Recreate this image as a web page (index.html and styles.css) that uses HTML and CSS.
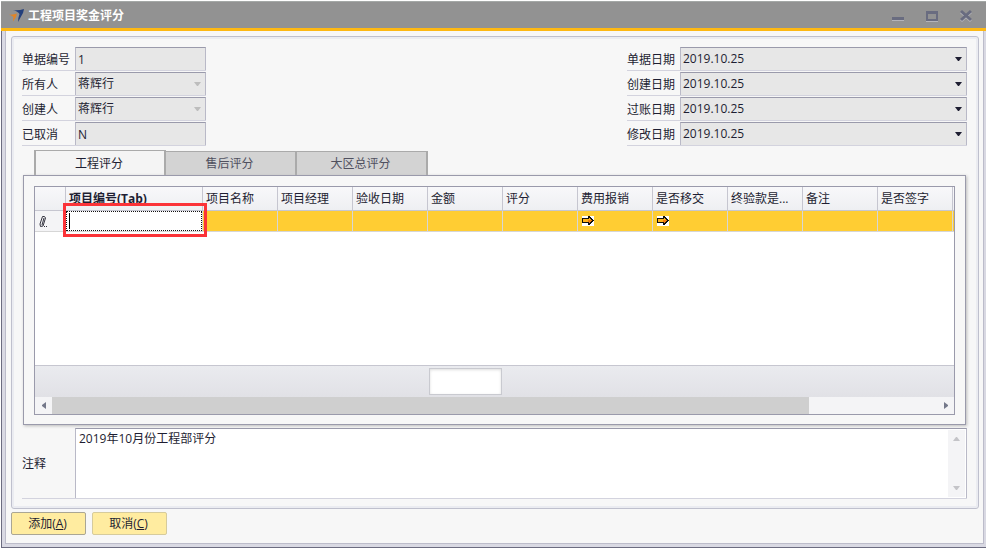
FILE: index.html
```
<!DOCTYPE html>
<html lang="zh-CN">
<head>
  <meta charset="UTF-8" />
  <meta name="viewport" content="width=device-width, initial-scale=1.0"/>
  <title>工程项目奖金评分</title>
  <link rel="stylesheet" href="styles.css">
</head>
<body>
  <div class="window">
    <div class="titlebar">
      <svg class="logo" width="16" height="14" viewBox="0 0 16 14">
        <path d="M4 1 Q9 2 15 0 L14 4 L9 13 Q9 9 10.500 5 Q9 2.500 4 1Z" fill="#24407c"/>
        <path d="M0 5.500 Q4 6 8 4.500 L7 8 L4 12.500 Q4 10 4.500 8 Q3 6.500 0 5.500Z" fill="#e08428"/>
      </svg>
      <h1 class="title">工程项目奖金评分</h1>
      <button class="win-btn" aria-label="最小化">
        <svg width="14" height="14" viewBox="0 0 14 14"><path d="M1 11h12v1H1z" fill="#b4b4ba"/><path d="M1 8h12v3H1z" fill="#696c80"/></svg>
      </button>
      <button class="win-btn" aria-label="最大化">
        <svg width="14" height="14" viewBox="0 0 14 14"><path d="M1 12h12v1H1z" fill="#b4b4ba"/><path d="M1 2h12v10H1zM3 5v5h8V5z" fill="#696c80" fill-rule="evenodd"/></svg>
      </button>
      <button class="win-btn" aria-label="关闭">
        <svg width="14" height="14" viewBox="0 0 14 14"><path d="M2 3l10 9M12 3L2 12" stroke="#b4b4ba" stroke-width="3"/><path d="M2 2l10 9M12 2L2 11" stroke="#696c80" stroke-width="3"/></svg>
      </button>
    </div>

    <div class="frame">
      <div class="client">
        <form class="panel" id="scoreForm">
          <div class="fields">
            <div class="field-col left">
              <div class="field">
                <label for="docNo">单据编号</label>
                <div class="control"><input id="docNo" type="text" value="1" readonly></div>
              </div>
              <div class="field">
                <label for="owner">所有人</label>
                <div class="control">
                  <select id="owner" disabled><option>蒋辉行</option></select>
                  <svg class="caret off" width="7" height="4" viewBox="0 0 7 4"><path d="M0 0h7L4 4H3z"/></svg>
                </div>
              </div>
              <div class="field">
                <label for="creator">创建人</label>
                <div class="control">
                  <select id="creator" disabled><option>蒋辉行</option></select>
                  <svg class="caret off" width="7" height="4" viewBox="0 0 7 4"><path d="M0 0h7L4 4H3z"/></svg>
                </div>
              </div>
              <div class="field">
                <label for="cancelled">已取消</label>
                <div class="control"><input id="cancelled" type="text" value="N" readonly></div>
              </div>
            </div>

            <div class="field-col right">
              <div class="field">
                <label for="docDate">单据日期</label>
                <div class="control">
                  <select id="docDate"><option>2019.10.25</option></select>
                  <svg class="caret" width="7" height="4" viewBox="0 0 7 4"><path d="M0 0h7L4 4H3z"/></svg>
                </div>
              </div>
              <div class="field">
                <label for="createDate">创建日期</label>
                <div class="control">
                  <select id="createDate"><option>2019.10.25</option></select>
                  <svg class="caret" width="7" height="4" viewBox="0 0 7 4"><path d="M0 0h7L4 4H3z"/></svg>
                </div>
              </div>
              <div class="field">
                <label for="postDate">过账日期</label>
                <div class="control">
                  <select id="postDate"><option>2019.10.25</option></select>
                  <svg class="caret" width="7" height="4" viewBox="0 0 7 4"><path d="M0 0h7L4 4H3z"/></svg>
                </div>
              </div>
              <div class="field">
                <label for="editDate">修改日期</label>
                <div class="control">
                  <select id="editDate"><option>2019.10.25</option></select>
                  <svg class="caret" width="7" height="4" viewBox="0 0 7 4"><path d="M0 0h7L4 4H3z"/></svg>
                </div>
              </div>
            </div>
          </div>

          <div class="tabs" role="tablist">
            <button type="button" class="tab active" role="tab" aria-selected="true">工程评分</button>
            <button type="button" class="tab" role="tab" aria-selected="false">售后评分</button>
            <button type="button" class="tab" role="tab" aria-selected="false">大区总评分</button>
          </div>

          <div class="tab-page" role="tabpanel">
            <div class="grid">
              <div class="grid-body">
                <table>
                  <colgroup>
                    <col class="col-mark"><col class="col-code">
                    <col class="col"><col class="col"><col class="col"><col class="col"><col class="col">
                    <col class="col"><col class="col"><col class="col"><col class="col"><col class="col"><col class="col">
                  </colgroup>
                  <thead>
                    <tr>
                      <th></th>
                      <th class="key">项目编号(Tab)</th>
                      <th>项目名称</th>
                      <th>项目经理</th>
                      <th>验收日期</th>
                      <th>金额</th>
                      <th>评分</th>
                      <th>费用报销</th>
                      <th>是否移交</th>
                      <th>终验款是...</th>
                      <th>备注</th>
                      <th>是否签字</th>
                      <th></th>
                    </tr>
                  </thead>
                  <tbody>
                    <tr>
                      <td class="mark">
                        <svg width="10" height="14" viewBox="0 0 10 14"><path d="M3.500 2.500L5.500 2.500L6.500 4L4 12L1.500 12.500L1 10Z M5 4L3 11" fill="none" stroke="#33333f"/><path d="M5 12h1v1H5zM7 12h1v1H7z" fill="#33333f"/></svg>
                      </td>
                      <td class="edit">
                        <input type="text" aria-label="项目编号">
                        <span class="cursor"></span>
                        <span class="highlight"></span>
                      </td>
                      <td></td>
                      <td></td>
                      <td></td>
                      <td></td>
                      <td></td>
                      <td>
                        <a class="link" href="#" aria-label="费用报销"><svg width="12" height="10" viewBox="0 0 12 10" shape-rendering="crispEdges"><path d="M0 2h6V0h2v1h1v1h1v1h1v1h1v1h-1v1h-1v1h-1v1H8v1H6V7H0z" fill="#111"/><path d="M1 3h6V1v1h1v1h1v1h1v1H9v1H8v1H7V6H1z" fill="#ffb21a"/><path d="M6 4h4v1H9v1H8v1H7V6H6z" fill="#f27c12"/></svg></a>
                      </td>
                      <td>
                        <a class="link" href="#" aria-label="是否移交"><svg width="12" height="10" viewBox="0 0 12 10" shape-rendering="crispEdges"><path d="M0 2h6V0h2v1h1v1h1v1h1v1h1v1h-1v1h-1v1h-1v1H8v1H6V7H0z" fill="#111"/><path d="M1 3h6V1v1h1v1h1v1h1v1H9v1H8v1H7V6H1z" fill="#ffb21a"/><path d="M6 4h4v1H9v1H8v1H7V6H6z" fill="#f27c12"/></svg></a>
                      </td>
                      <td></td>
                      <td></td>
                      <td></td>
                      <td></td>
                    </tr>
                  </tbody>
                </table>
              </div>
              <div class="grid-total">
                <input type="text" aria-label="金额合计" readonly>
              </div>
              <div class="hscroll">
                <button type="button" class="scroll-btn" aria-label="向左"><svg width="4" height="7" viewBox="0 0 4 7"><path d="M4 0v7L0 4V3z"/></svg></button>
                <div class="track"><div class="thumb"></div></div>
                <button type="button" class="scroll-btn" aria-label="向右"><svg width="4" height="7" viewBox="0 0 4 7"><path d="M0 0v7l4-3V3z"/></svg></button>
              </div>
            </div>
          </div>

          <div class="remarks">
            <label for="remarks">注释</label>
            <div class="remarks-box">
              <textarea id="remarks">2019年10月份工程部评分</textarea>
              <div class="vscroll">
                <svg width="7" height="4" viewBox="0 0 7 4"><path d="M0 4h7L4 0H3z"/></svg>
                <svg width="7" height="4" viewBox="0 0 7 4"><path d="M0 0h7L4 4H3z"/></svg>
              </div>
            </div>
          </div>
        </form>

        <div class="actions">
          <button class="btn primary" type="submit" form="scoreForm">添加(<u>A</u>)</button>
          <button class="btn" type="button">取消(<u>C</u>)</button>
        </div>
      </div>
    </div>
  </div>
</body>
</html>
```

FILE: styles.css
```
* {
  box-sizing: border-box;
}

body {
  margin: 0;
  padding: 1px 0 1px 1px;
  height: 100vh;
  background-color: #fff;
  color: #1e1e32;
}

body,
input,
select,
textarea,
button {
  font-family: "Open Sans", "Noto Sans CJK SC", sans-serif;
  font-size: 12px;
  line-height: 16px;
}

input,
select,
textarea,
button {
  margin: 0;
  padding: 0;
  border: 0;
  border-radius: 0;
  outline: none;
  color: inherit;
  background: none;
}

.window {
  display: flex;
  flex-direction: column;
  height: 100%;
  min-height: 460px;
}

/* title bar */
.titlebar {
  display: flex;
  align-items: center;
  height: 30px;
  flex-shrink: 0;
  padding: 2px 3px 0 8px;
  background-color: #929292;
  border-top: 1px solid #a4a8a6;
  border-bottom: 3px solid #fdb813;
}

.title {
  flex: 1;
  margin: 0 0 0 3px;
  font-size: 12px;
  line-height: 16px;
  font-weight: bold;
  color: #fff;
}

.win-btn {
  display: flex;
  align-items: center;
  justify-content: center;
  width: 34px;
  height: 20px;
}

.frame {
  flex: 1;
  display: flex;
  min-height: 0;
  padding: 0 2px 3px 3px;
  background-color: #d9d9e3;
  border-left: 1px solid #6c6c80;
  border-bottom: 1px solid #6c6c80;
}

.client {
  flex: 1;
  min-width: 0;
  display: flex;
  flex-direction: column;
  padding: 5px 4px 8px 5px;
  background-color: #f7f7f7;
  border: 1px solid #bcbcca;
  border-top: 0;
}

.panel {
  flex: 1;
  min-height: 0;
  display: flex;
  flex-direction: column;
  padding: 10px 11px 9px 10px;
  border: 1px solid #bfc0cd;
  border-radius: 3px;
  box-shadow: inset 0 0 0 2px #ebecf1;
}

/* header fields */
.fields {
  display: flex;
  justify-content: space-between;
}

.left {
  width: 184px;
}

.right {
  width: 340px;
}

.field {
  display: flex;
  height: 24px;
  margin-bottom: 1px;
  border-bottom: 1px solid #d3d3de;
}

.field label {
  width: 53px;
  padding-top: 5px;
  white-space: nowrap;
}

.control {
  flex: 1;
  position: relative;
  background-color: #e7e7e7;
  border: 1px solid #b9b9c7;
  border-top-color: #9a9aab;
  border-bottom: 0;
}

.control input,
.control select {
  display: block;
  width: 100%;
  height: 22px;
  padding: 0 2px;
  appearance: none;
  opacity: 1;
}

.caret {
  position: absolute;
  right: 4px;
  top: 9px;
  fill: #1e1e32;
  pointer-events: none;
}

.caret.off {
  fill: #bdbdbd;
}

/* tabs */
.tabs {
  display: flex;
  align-items: flex-end;
  height: 28px;
  padding-left: 12px;
}

.tab {
  width: 131px;
  height: 24px;
  padding: 1px 2px 0 0;
  color: #50505f;
  background-color: #d3d3d3;
  border-top: 1px solid #aaa;
  border-right: 2px solid #aaa;
}

.tab.active {
  width: 132px;
  height: 25px;
  color: #1e1e32;
  background-color: #f4f4f4;
  border-left: 2px solid #aaa;
}

.tab-page {
  flex: 1;
  min-height: 0;
  display: flex;
  margin: 0 1px 3px 1px;
  padding: 10px 10px 9px;
  border: 1px solid #9a9aab;
  box-shadow: 1px 1px 3px #bbb;
}

/* grid */
.grid {
  flex: 1;
  min-width: 0;
  display: flex;
  flex-direction: column;
  border: 1px solid #9a9aab;
  background-color: #fff;
}

.grid-body {
  flex: 1;
  min-height: 0;
  overflow: hidden;
}

table {
  width: 993px;
  table-layout: fixed;
  border-spacing: 0;
}

.col-mark {
  width: 31px;
}

.col-code {
  width: 137px;
}

.col {
  width: 75px;
}

th {
  height: 24px;
  padding: 0 0 0 3px;
  text-align: left;
  font-weight: normal;
  white-space: nowrap;
  background: linear-gradient(#f8f8fa, #eeeff2);
  border-right: 1px solid #c6c6d0;
  border-bottom: 1px solid #c6c6d0;
}

th.key {
  font-weight: bold;
}

td {
  height: 21px;
  padding: 0 0 0 4px;
  background-color: #ffcd33;
  border-right: 1px solid #d6d6d6;
  border-bottom: 1px solid #d6d6d6;
}

td svg {
  display: block;
}

td.mark {
  background-color: #f4f4f6;
}

td.edit {
  position: relative;
  padding: 0;
  background-color: #fff;
}

td.edit input {
  display: block;
  width: 100%;
  height: 20px;
  padding: 0 3px;
  border: 1px dotted #111;
}

.cursor {
  position: absolute;
  left: 3px;
  top: 2px;
  width: 1px;
  height: 16px;
  background-color: #000;
}

.highlight {
  position: absolute;
  inset: -8px -5px -6px -3px;
  border: 3px solid #fb3338;
  pointer-events: none;
}

.link {
  display: block;
  width: 12px;
  background-color: #fff;
}

.grid-total {
  height: 32px;
  padding: 2px 0 0 394px;
  border-top: 1px solid #c6c6d0;
  background: linear-gradient(#eaebef, #e1e1e6);
}

.grid-total input {
  display: block;
  width: 73px;
  height: 27px;
  background-color: #fff;
  border: 1px solid #c9cad0;
  box-shadow: inset 0 1px 3px #ddd;
}

.hscroll {
  display: flex;
  height: 17px;
  background-color: #f4f4f6;
}

.scroll-btn {
  display: flex;
  align-items: center;
  justify-content: center;
  width: 17px;
}

.scroll-btn svg {
  fill: #74788a;
}

.track {
  flex: 1;
}

.thumb {
  width: 85.5%;
  height: 100%;
  background-color: #cfcfcf;
}

/* remarks */
.remarks {
  display: flex;
  align-items: center;
  height: 71px;
  flex-shrink: 0;
  border-bottom: 1px solid #d3d3de;
}

.remarks label {
  width: 53px;
  padding-top: 2px;
}

.remarks-box {
  flex: 1;
  align-self: stretch;
  display: flex;
  padding: 1px;
  background-color: #fff;
  border: 1px solid #b9b9c7;
  border-top-color: #9a9aab;
  border-bottom: 0;
}

.remarks textarea {
  flex: 1;
  padding: 1px 2px;
  resize: none;
}

.vscroll {
  display: flex;
  flex-direction: column;
  align-items: center;
  justify-content: space-between;
  width: 17px;
  padding: 7px 0;
  background-color: #f4f4f6;
  fill: #c4c4c8;
}

/* buttons */
.actions {
  display: flex;
  gap: 6px;
  margin-top: 3px;
}

.btn {
  width: 75px;
  height: 23px;
  padding-right: 2px;
  background-color: #ffeca0;
  border: 1px solid #d6cb9c;
  border-radius: 2px;
}

.btn.primary {
  border-color: #aaa694;
}
```
